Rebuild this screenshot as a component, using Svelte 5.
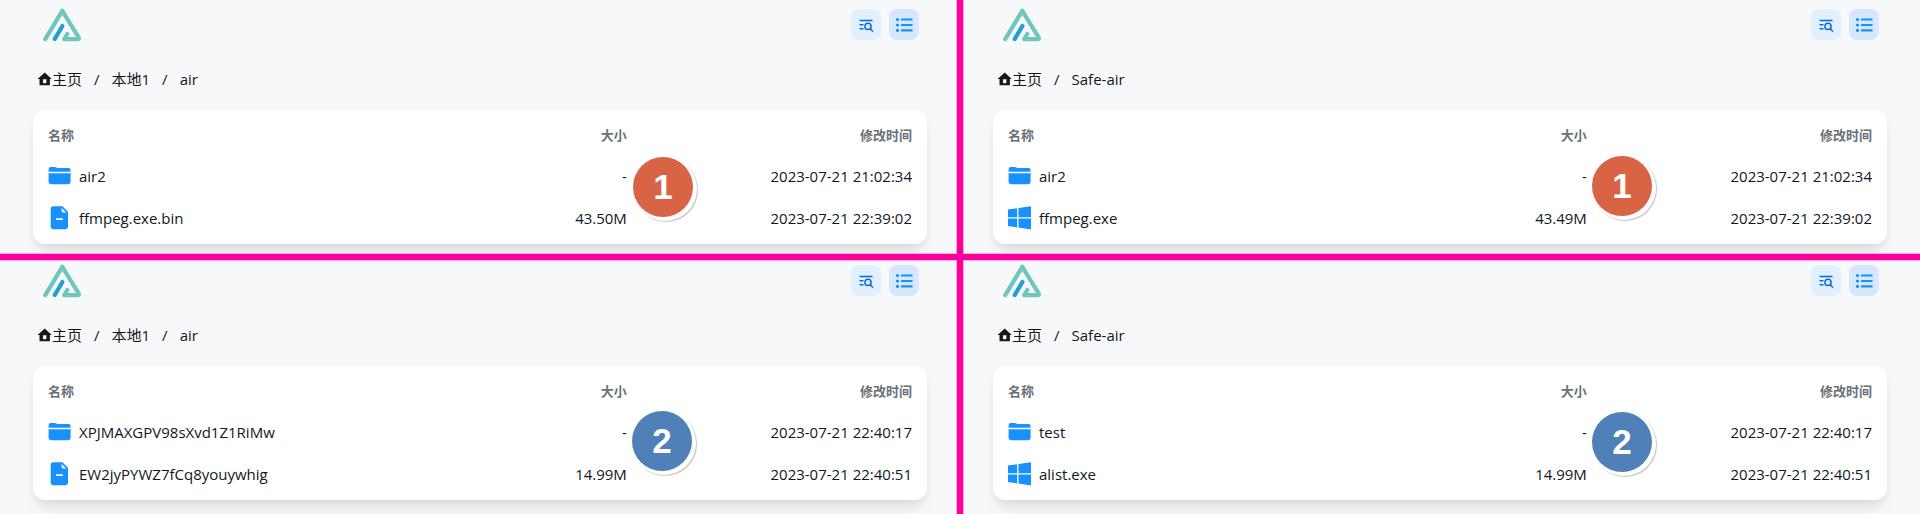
<script>
  const panels = [
    {
      id: 'local-1', step: 1, tone: 'orange', left: 633, top: 157,
      crumbs: ['本地1', 'air'],
      rows: [
        { icon: 'folder', name: 'air2', size: '-', time: '2023-07-21 21:02:34' },
        { icon: 'file', name: 'ffmpeg.exe.bin', size: '43.50M', time: '2023-07-21 22:39:02' }
      ]
    },
    {
      id: 'safe-1', step: 1, tone: 'orange', left: 632, top: 156,
      crumbs: ['Safe-air'],
      rows: [
        { icon: 'folder', name: 'air2', size: '-', time: '2023-07-21 21:02:34' },
        { icon: 'windows', name: 'ffmpeg.exe', size: '43.49M', time: '2023-07-21 22:39:02' }
      ]
    },
    {
      id: 'local-2', step: 2, tone: 'blue', left: 632, top: 155,
      crumbs: ['本地1', 'air'],
      rows: [
        { icon: 'folder', name: 'XPJMAXGPV98sXvd1Z1RiMw', size: '-', time: '2023-07-21 22:40:17' },
        { icon: 'file', name: 'EW2jyPYWZ7fCq8youywhig', size: '14.99M', time: '2023-07-21 22:40:51' }
      ]
    },
    {
      id: 'safe-2', step: 2, tone: 'blue', left: 632, top: 156,
      crumbs: ['Safe-air'],
      rows: [
        { icon: 'folder', name: 'test', size: '-', time: '2023-07-21 22:40:17' },
        { icon: 'windows', name: 'alist.exe', size: '14.99M', time: '2023-07-21 22:40:51' }
      ]
    }
  ];
</script>

<main class="board">
  {#each panels as panel (panel.id)}
    <section class="panel">
      <header class="top">
        <a class="logo" href="#home" aria-label="AList">
          <svg viewBox="0 0 38 34" width="38" height="34" fill="none" stroke-width="4.2" stroke-linecap="round" stroke-linejoin="round">
            <path d="M2.2 31.2 L19.3 2.8 L35.6 29.4 Q36.5 31.2 34.6 31.2 H21.2 L24.3 26" stroke="#70c6be" />
            <path d="M11.7 31 L19.4 18" stroke="#1ba0d8" />
          </svg>
        </a>
        <div class="tools">
          <button class="tool" type="button" aria-label="搜索">
            <svg viewBox="0 0 18 18" width="18" height="18" fill="none" stroke="#0a6cdb" stroke-width="1.5">
              <path d="M2.5 4.5H15.5M2.5 8.7H6.5M2.5 12.7H6.5M13.2 12.8L16 15.6" />
              <circle cx="11" cy="10.4" r="3.1" />
            </svg>
          </button>
          <button class="tool active" type="button" aria-label="列表视图">
            <svg viewBox="0 0 18 16" width="18" height="16" fill="none" stroke="#1890ff" stroke-linecap="round">
              <path d="M6.9 2.5H16.7M6.9 8H16.7M6.9 13.4H16.7" stroke-width="2.2" />
              <path d="M2.5 2.5h.01M2.5 8h.01M2.5 13.4h.01" stroke-width="3.2" />
            </svg>
          </button>
        </div>
      </header>

      <nav class="crumbs" aria-label="路径">
        <a href="#home">
          <svg viewBox="0 0 15 14" width="15" height="14" fill="#11181c">
            <path fill-rule="evenodd" d="M7.7 .6 14.8 6.9H12.9V13.2H2.5V6.9H.6ZM6 7.2V11.2H9.4V7.2Z" />
          </svg>主页</a>
        {#each panel.crumbs as crumb}
          <span class="slash">/</span><a href="#{crumb}">{crumb}</a>
        {/each}
      </nav>

      <div class="card">
        <table>
          <thead>
            <tr><th class="name">名称</th><th class="size">大小</th><th class="time">修改时间</th></tr>
          </thead>
          <tbody>
            {#each panel.rows as row}
              <tr>
                <td>
                  <a class="entry" href="#{row.name}">
                    <svg viewBox="0 0 24 24" width="24" height="24" fill="#1890ff">
                      {#if row.icon === 'folder'}
                        <path d="M.6 7.8V5.2Q.6 3 2.8 3H7Q8 3 8.7 3.7L9.4 4.1H20.4Q22.6 4.1 22.6 6.4V7.8Z" />
                        <path d="M.6 9.2H22.6V17.8Q22.6 20.2 20.2 20.2H3Q.6 20.2 .6 17.8Z" />
                      {:else if row.icon === 'file'}
                        <path fill-rule="evenodd" d="M5.2 .2H14.4L20 5.8V20.8Q20 23.2 17.6 23.2H5.2Q2.7 23.2 2.7 20.8V2.6Q2.7 .2 5.2 .2ZM8 12.3V14H14.8V12.3ZM13.6 2V4.8Q13.6 6.6 15.4 6.6H18.2Z" />
                      {:else}
                        <path d="M0 3.4 9.2 2.2V11.2H0ZM10.5 2 23 .2V11.2H10.5ZM0 12.4H9.2V21.4L0 20.1ZM10.5 12.4H23V23.4L10.5 21.6Z" />
                      {/if}
                    </svg>
                    <span>{row.name}</span>
                  </a>
                </td>
                <td class="num">{row.size}</td>
                <td class="num">{row.time}</td>
              </tr>
            {/each}
          </tbody>
        </table>
      </div>

      <span class="badge {panel.tone}" style="left: {panel.left / 9.6}%; top: {panel.top}px">{panel.step}</span>
    </section>
  {/each}
  <div class="rule across"></div>
  <div class="rule down"></div>
</main>

<style>
  :global(body) {
    background: #f7f8fa;
    overflow: hidden;
  }
  .board {
    position: relative;
    display: grid;
    grid-template-columns: 1fr 1fr;
    grid-template-rows: 256px 258px;
    overflow: hidden;
    background: #f7f8fa;
    color: #11181c;
    font: 400 15px/24px "Open Sans", "Noto Sans CJK SC", sans-serif;
  }
  .panel {
    position: relative;
    padding: 8px 33px 0;
  }
  a {
    color: inherit;
    text-decoration: none;
  }
  svg {
    display: block;
    flex: none;
  }
  .top {
    display: flex;
    justify-content: space-between;
    align-items: center;
    height: 33px;
    padding: 0 8px 0 10px;
  }
  .tools {
    display: flex;
    gap: 8px;
  }
  .tool {
    display: grid;
    place-items: center;
    width: 30px;
    height: 31px;
    padding: 0;
    border: 0;
    border-radius: 8px;
    background: #e1f0ff;
  }
  .tool.active {
    background: #d5e8fd;
  }
  .crumbs {
    display: flex;
    align-items: center;
    padding: 26px 4px 19px;
  }
  .crumbs a {
    display: flex;
    align-items: center;
  }
  .slash {
    margin: 0 12px;
  }
  .card {
    padding: 5px 15px;
    border-radius: 12px;
    background: #fff;
    box-shadow: 0 10px 15px -3px rgba(0, 0, 0, 0.1), 0 4px 6px -2px rgba(0, 0, 0, 0.05);
  }
  table {
    width: 100%;
    table-layout: fixed;
    border-collapse: collapse;
  }
  th, td {
    padding: 0;
    text-align: left;
  }
  th {
    height: 40px;
    color: #687076;
    font-size: 13px;
    font-weight: 700;
  }
  td {
    height: 42px;
  }
  .name {
    width: 50%;
  }
  .size {
    width: 17%;
    text-align: right;
  }
  .time {
    width: 33%;
    text-align: right;
  }
  .num {
    text-align: right;
  }
  .entry {
    display: flex;
    align-items: center;
    gap: 7px;
  }
  .badge {
    position: absolute;
    width: 60px;
    border-radius: 50%;
    color: #fff;
    font: 700 35px/60px "Liberation Sans", sans-serif;
    text-align: center;
    box-shadow: 2px 2px 0 2px #fff, 3px 3px 1px 2px #c4c4c4;
  }
  .orange {
    background: #d96445;
  }
  .blue {
    background: #4f81b8;
  }
  .rule {
    position: absolute;
    background: #ff0099;
    box-shadow: 0 0 0 1px rgba(255, 0, 153, 0.3);
  }
  .across {
    top: 254px;
    left: 0;
    right: 0;
    height: 6px;
  }
  .down {
    top: 0;
    bottom: 0;
    left: calc(50% - 3px);
    width: 6px;
  }
</style>
